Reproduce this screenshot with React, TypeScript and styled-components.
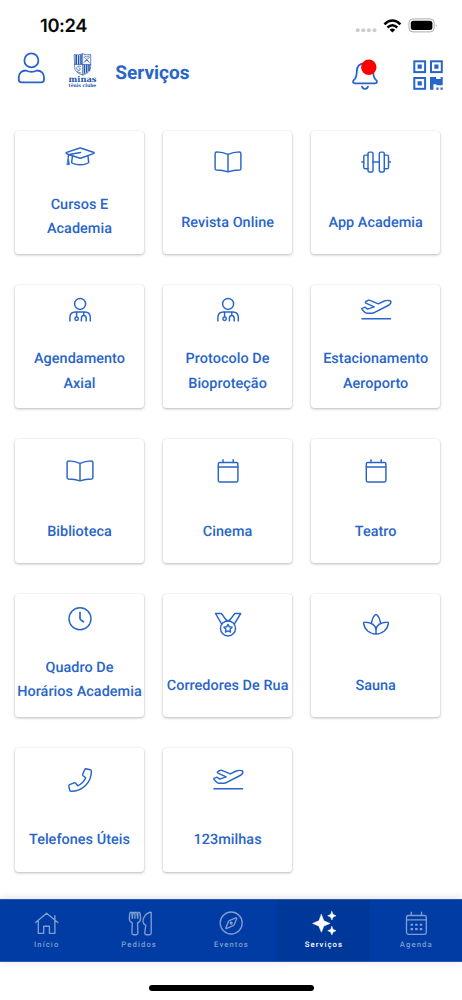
import React from "react";
import styled, { createGlobalStyle } from "styled-components";

const BLUE = "#2865c8";
const NAVY = "#003ca3";

const GlobalStyle = createGlobalStyle`
  * { box-sizing: border-box; }
  body { margin: 0; background: #fff; font-family: Roboto, "Liberation Sans", sans-serif; text-rendering: geometricPrecision; }
`;

const Screen = styled.div`
  width: 462px;
  height: 1000px;
  display: flex;
  flex-direction: column;
  background: #fff;
  overflow: hidden;
`;

const StatusBar = styled.div`
  height: 50px;
  padding: 0 27px 0 40px;
  display: flex;
  justify-content: space-between;
  align-items: center;
  flex: none;
`;

const Clock = styled.span`
  font: 600 18.3px/24px Inter, sans-serif;
  letter-spacing: -0.35px;
  color: #080808;
  padding-top: 1px;
`;

const Header = styled.header`
  height: 64px;
  flex: none;
  display: flex;
  align-items: flex-start;
  padding: 0 18px 0 17px;
`;

const HeaderIcon = styled.svg<{ $left?: number }>`
  flex: none;
  margin-left: ${(p) => p.$left ?? 0}px;
  fill: none;
  stroke: ${BLUE};
  stroke-width: 1.8;
  stroke-linecap: round;
  stroke-linejoin: round;
`;

const Title = styled.h1`
  margin: 11px auto 0 17.3px;
  font-size: 19px;
  line-height: 24px;
  font-weight: 700;
  letter-spacing: 0;
  color: ${BLUE};
`;

const Grid = styled.main`
  flex: none;
  height: 785px;
  padding: 16.7px 0 0 14.7px;
  display: grid;
  grid-template-columns: repeat(3, 129.6px);
  grid-auto-rows: 123.4px;
  column-gap: 18.5px;
  row-gap: 31px;
  align-content: start;
`;

const Card = styled.section`
  display: flex;
  flex-direction: column;
  align-items: center;
  background: #fff;
  border-radius: 3.5px;
  box-shadow: 0 1px 3px rgba(0, 0, 0, 0.27), 0 0 1.5px rgba(0, 0, 0, 0.08);
`;

const IconSlot = styled.div<{ $wrapped: boolean }>`
  display: flex;
  align-items: center;
  height: 50px;
  padding: 0.6px 0 0 0.6px;
  margin-top: ${(p) => (p.$wrapped ? 0 : 6)}px;
`;

const Glyph = styled.svg`
  display: block;
  width: 32px;
  height: 32px;
  overflow: visible;
  fill: none;
  stroke: currentColor;
  stroke-width: 1.45;
  stroke-linecap: round;
  stroke-linejoin: round;
  color: ${BLUE};
`;

const Label = styled.div<{ $wrapped: boolean }>`
  margin-top: ${(p) => (p.$wrapped ? 12.1 : 24.2)}px;
  font-size: 14.4px;
  line-height: 24.5px;
  font-weight: 500;
  letter-spacing: 0.06px;
  text-align: center;
  white-space: pre;
  color: ${BLUE};
`;

const TabBar = styled.nav`
  flex: none;
  height: 62.7px;
  display: grid;
  grid-template-columns: repeat(5, 1fr);
  background: ${NAVY};
  border-top: 1px solid #2858ac;
  border-bottom: 1px solid #2359b9;
  box-shadow: 0 -1px 8px rgba(0, 0, 0, 0.12);
`;

const Tab = styled.div<{ $active: boolean }>`
  display: flex;
  flex-direction: column;
  align-items: center;
  padding-top: 7px;
  background: ${(p) => (p.$active ? "#003899" : "transparent")};
  color: ${(p) => (p.$active ? "#fff" : "#7f9dd1")};
  ${Glyph} { color: inherit; stroke-width: 1.35; margin-left: 0.6px; }
`;

const TabLabel = styled.span`
  margin-top: 0.8px;
  padding-left: 1px;
  font-size: 7.7px;
  line-height: 10px;
  font-weight: 500;
  letter-spacing: 1.1px;
`;

const HomeArea = styled.footer`
  flex: 1;
  display: flex;
  justify-content: center;
  padding-top: 23.3px;
`;

const HomeIndicator = styled.div`
  width: 165px;
  height: 5.6px;
  border-radius: 3px;
  background: #000;
`;

const glyphs: Record<string, React.ReactNode> = {
  cap: (
    <>
      <path d="M15.1 8.2Q16.2 7.9 17.3 8.2L29.3 12.2Q31 12.9 29.3 13.6L17.3 18Q16.2 18.4 15.1 18L2.7 13.7Q1.4 13.1 2.7 12.4Z" />
      <path d="M8.4 16.4 7.6 22.5Q10.4 24.8 16.2 24.8T24.7 22.5L24 16.4M16.6 12.5 6.5 14.3Q4.5 14.8 4.3 16.4" />
      <path d="M4.3 16.2 5.4 24.7H3.2Z" fill="currentColor" strokeWidth=".7" />
    </>
  ),
  book: <path d="M16 8.4Q10.8 6.2 4.8 5.9 3.1 5.9 3.1 7.5V22.5Q3.1 23.8 4.4 24 11 24.2 16 25.9 21 24.2 27.6 24 28.9 23.8 28.9 22.5V7.5Q28.9 5.9 27.2 5.9 21.2 6.2 16 8.4ZM16 8.4V25.5" />,
  dumbbell: (
    <>
      <rect x="8" y="6.1" width="5" height="19.8" rx="1.5" />
      <rect x="19.3" y="6.1" width="5" height="19.8" rx="1.5" />
      <path d="M8 9.1H5.2Q3.8 9.1 3.8 10.5V21.4Q3.8 22.8 5.2 22.8H8M24.3 9.1H27.1Q28.5 9.1 28.5 10.5V21.4Q28.5 22.8 27.1 22.8H24.3M13 16H19.3M1.8 16H3.8M28.5 16H30.5" />
    </>
  ),
  doctor: (
    <>
      <circle cx="16.1" cy="9.9" r="5.5" />
      <path strokeLinecap="butt" d="M5.9 27.5V23.6C5.9 19.9 7.7 17.9 11.4 17.9H20.8C24.5 17.9 26.3 19.9 26.3 23.6V27.5M12.6 18V23M19.8 18V21.5M17.4 27.5V24.4C17.4 22.4 18.2 21.5 19.8 21.5S22.2 22.4 22.2 24.4V27.5" />
      <circle cx="12.6" cy="24.7" r="1.7" />
    </>
  ),
  plane: (
    <>
      <path d="M2 15.4C1.5 14.8 1.8 14.3 2.6 14.1L4.4 13.4Q5.2 13.1 5.9 13.8L7.7 15.1 14.2 12.9 5.9 9.2Q4.7 8.4 6 7.5L8 6.4Q9 5.9 10 6.4L18.3 9.9 24.2 7Q27.5 5.9 30 6.7 31.4 7.4 30.8 8.9 30 10.7 27.2 12L15.2 18.1Q13.3 19.2 11.7 19.2H6.8Q5.6 19.2 4.8 18.3Z" />
      <path d="M2 24.8H30.6" />
    </>
  ),
  calendar: (
    <>
      <rect x="6.3" y="7.4" width="19.6" height="19.6" rx="1.4" />
      <path d="M6.3 11.9H25.9M11 4.7V7.4M21.2 4.7V7.4" />
    </>
  ),
  clock: (
    <>
      <circle cx="16" cy="15.7" r="11" />
      <path strokeWidth="1.7" d="M16 9.4V15.2Q16 16.2 16.8 16.9L19.4 18.8" />
    </>
  ),
  medal: (
    <>
      <path d="M9.6 14.9 3.5 4.5H9.4L14.8 11.9M22.4 14.9 28.7 4.5H22.8L17.2 11.9M12.5 9 16 12.2 19.5 9" />
      <circle cx="16" cy="19.4" r="7.5" />
      <path d="m16 15.3 1.3 2.5 2.8.5-2 2 .4 2.8-2.5-1.2-2.5 1.2.4-2.8-2-2 2.8-.5Z" />
    </>
  ),
  lotus: <path d="M11.5 14.6C11.8 10.5 13.7 7.3 15.3 5.8Q16 5.3 16.7 5.8C18.3 7.3 20.2 10.5 20.5 14.6M16 24.7V21.3C16 17.2 12.4 13.6 4.4 13.1Q3.4 13.1 3.6 14.1C4.4 20.6 9.5 24.9 16 24.9S27.6 20.6 28.4 14.1Q28.6 13.1 27.6 13.1C19.6 13.6 16 17.2 16 21.3" />,
  phone: <path d="M22 4.7 26.2 5.7Q27.4 6 27.4 7.2C27.4 18.4 18.4 27.3 7.1 27.3 6.3 27.3 5.9 26.8 5.7 26.2L4.8 22.2Q4.6 21.1 5.6 20.6L10.1 18.8Q11 18.5 11.6 19.2L13.8 21.8C17.3 20.2 20.2 17.3 21.7 13.8L19.1 11.7Q18.4 11.1 18.7 10.2L20.7 5.6Q21.1 4.6 22 4.7Z" />,
  home: <path d="M5.6 15.6 16.6 6.2 27.8 15.6M8.3 13.6V26.4H13.7V19.2H19.4V26.4H24.9V13.6M24.9 13V8.7" />,
  cutlery: (
    <path d="M8 5.2Q6.9 5.2 6.8 6.2L6.3 11.2Q6.2 14.4 9.3 15.9L8.9 26Q9 27.7 10.7 27.7H13.1Q14.8 27.7 14.9 26L14.5 15.9Q17.8 14.4 17.6 11.2L17 6.2Q16.8 5.2 15.9 5.2T14.9 6.5L14.7 11.4 13.9 6Q13.8 5.2 12.8 5.2 11.9 5.2 11.9 6.4V11.3M12 6.4Q11.8 5.2 10.9 5.2T9.9 6.2L9.2 11.4 9 6.3Q8.9 5.2 8 5.2ZM28.2 5.3Q24.8 5.1 22 8.7 19.9 11.5 20 14.5 20 16.8 22.7 18.3L21.8 25.7Q21.7 27.7 23.6 27.7H26.6Q28.2 27.7 28.2 26Z" />
  ),
  compass: (
    <>
      <circle cx="16.2" cy="16" r="11" />
      <path d="M20.7 10.9 14.3 13.6Q13.8 13.8 13.6 14.3L10.9 20.7Q10.5 22 11.8 21.4L18.2 18.7Q18.8 18.5 19 17.9L21.7 11.8Q22 10.5 20.7 10.9Z" />
      <circle cx="16.2" cy="16.1" r=".9" />
    </>
  ),
  sparkles: (
    <path
      fill="currentColor"
      strokeWidth=".5"
      d="M13.4 7.4 15.9 13.8 22.1 16.4 15.9 19 13.4 25.3 10.8 19 4.6 16.4 10.8 13.8ZM23.9 4.5 25.1 7.5 28 8.8 25.1 10.1 23.9 13 22.6 10.1 19.7 8.8 22.6 7.5ZM23.9 19.5 25.1 22.5 28 23.7 25.1 25 23.9 27.9 22.6 25 19.7 23.7 22.6 22.5Z"
    />
  ),
  agenda: (
    <>
      <rect x="6.5" y="8.5" width="19.8" height="18.8" rx="1.8" />
      <path d="M6.5 12.8H26.3M11.3 5.2V8.5M21.5 5.2V8.5" />
      <path strokeLinecap="square" strokeWidth="2.1" d="M11.6 17.8H12M16.2 17.8H16.6M20.8 17.8H21.2M11.6 22.1H12M16.2 22.1H16.6M20.8 22.1H21.2" />
    </>
  ),
};

const Icon = ({ name }: { name: string }) => <Glyph viewBox="0 0 32 32">{glyphs[name]}</Glyph>;

const services = [
  ["cap", "Cursos E\nAcademia"],
  ["book", "Revista Online"],
  ["dumbbell", "App Academia"],
  ["doctor", "Agendamento\nAxial"],
  ["doctor", "Protocolo De\nBioproteção"],
  ["plane", "Estacionamento\nAeroporto"],
  ["book", "Biblioteca"],
  ["calendar", "Cinema"],
  ["calendar", "Teatro"],
  ["clock", "Quadro De\nHorários Academia"],
  ["medal", "Corredores De Rua"],
  ["lotus", "Sauna"],
  ["phone", "Telefones Úteis"],
  ["plane", "123milhas"],
];

const tabs = [
  ["home", "Início"],
  ["cutlery", "Pedidos"],
  ["compass", "Eventos"],
  ["sparkles", "Serviços"],
  ["agenda", "Agenda"],
];

const StatusIcons = () => (
  <svg width="80" height="18" viewBox="355 15.5 80 18">
    <g fill="#ccc">
      <circle cx="357.7" cy="29.7" r="2" />
      <circle cx="363.3" cy="29.7" r="2" />
      <circle cx="368.9" cy="29.7" r="2" />
      <circle cx="374.5" cy="29.7" r="2" />
    </g>
    <g fill="none" stroke="#000" strokeWidth="2.5">
      <path d="M384.4 23.8Q392.4 16.2 400.4 23.8" />
      <path d="M387.5 27Q392.4 22.6 397.3 27" />
    </g>
    <path d="M389.6 29.2Q392.4 27 395.2 29.2L392.4 32Z" />
    <rect x="409" y="18.4" width="25.2" height="13" rx="4" fill="none" stroke="#aaa" />
    <rect x="410.8" y="20.2" width="21.6" height="9.4" rx="2.5" />
    <path d="M435.9 23.2Q437.4 24.9 435.9 26.6Z" fill="#aaa" />
  </svg>
);

const StatusIconsBox = styled.div`
  display: flex;
  svg { overflow: visible; }
`;

const Logo = () => (
  <HeaderIcon $left={22} width="30" height="40" viewBox="68 50 30 40">
    <g stroke="#2355ad" strokeWidth=".7">
      <path d="M74.6 54.6Q78.8 55.5 82.6 53.8 86.6 55.5 90.7 54.6V66.5C90.7 71 88 73.4 82.6 75 77.3 73.4 74.6 71 74.6 66.5Z" />
      <path d="M74.6 64.4H90.7M82.6 54V75" />
      <path strokeWidth="1.6" strokeLinecap="butt" d="M76.2 55V64.4M78.6 55.2V64.4M81 54.5V64.4M84.4 64.4V73.8M86.7 64.4V72.7M89 64.4V70.9" />
      <path d="M84 57.2 89.3 62.5M89.3 57.2 84 62.5M84.7 56.2Q87 58.3 89.2 56.2M85 61Q86.7 59.3 88.5 61" />
      <path d="M80.6 66.4Q76.7 65.2 76.6 68.6 77.2 71.2 79.7 70.2 81.5 68.5 79 67.8M77.2 71.7 81 73" />
    </g>
    <g fill="#2355ad" stroke="none" fontFamily="'DejaVu Serif', serif" fontWeight="700">
      <text x="68.5" y="82.4" fontSize="8.2" textLength="28" lengthAdjust="spacingAndGlyphs">minas</text>
      <text x="68.6" y="87" fontSize="4.7" textLength="27.6" lengthAdjust="spacingAndGlyphs">tênis clube</text>
    </g>
  </HeaderIcon>
);

export default function App() {
  return (
    <Screen>
      <GlobalStyle />
      <StatusBar>
        <Clock>10:24</Clock>
        <StatusIconsBox>
          <StatusIcons />
        </StatusIconsBox>
      </StatusBar>
      <Header>
        <HeaderIcon width="29" height="36" viewBox="17 50 29 36">
          <circle cx="31.4" cy="60.4" r="7" />
          <path d="M25.8 70.5C29.3 72.1 33.6 72.1 37 70.5 41.2 70.5 44 73.5 44 77.4V79.4Q44 82.3 41.1 82.3H21.7Q18.8 82.3 18.8 79.4V77.4C18.8 73.5 21.6 70.5 25.8 70.5Z" />
        </HeaderIcon>
        <Logo />
        <Title>Serviços</Title>
        <HeaderIcon width="29" height="42" viewBox="351 50 29 42">
          <path d="M355 83.3H375C377.2 83.3 377.4 81.3 376.2 80.2 373.5 77.7 373.2 75.8 373.2 71.4 373.2 66.2 370 63.3 365 63.3S356.8 66.2 356.8 71.4C356.8 75.8 356.5 77.7 353.8 80.2 352.6 81.3 352.8 83.3 355 83.3ZM362 86.6Q362.6 88.8 365 88.8T368 86.6" />
          <circle cx="368.8" cy="67.3" r="7.7" fill="#fe0000" stroke="none" />
        </HeaderIcon>
        <HeaderIcon $left={32} width="32" height="42" viewBox="412 50 32 42">
          <g strokeLinejoin="miter" strokeWidth="2">
            <rect x="414.3" y="61.3" width="10.8" height="10.8" />
            <rect x="431" y="61.3" width="10.8" height="10.8" />
            <rect x="414.3" y="78" width="10.8" height="10.8" />
          </g>
          <path fill={BLUE} stroke="none" d="M417.6 64.6h4.2v4.2h-4.2zM434.3 64.6h4.2v4.2h-4.2zM417.6 81.3h4.2v4.2h-4.2zM430 77h6.2v2h4.4v-2h2.1v8.3h-6.3v-1h-3v5.4H430zM436.3 87.4h2.2v2.3h-2.2zM440.5 87.4h2.2v2.3h-2.2z" />
        </HeaderIcon>
      </Header>
      <Grid>
        {services.map(([icon, label]) => {
          const wrapped = label.includes("\n");
          return (
            <Card key={label}>
              <IconSlot $wrapped={wrapped}>
                <Icon name={icon} />
              </IconSlot>
              <Label $wrapped={wrapped}>{label}</Label>
            </Card>
          );
        })}
      </Grid>
      <TabBar>
        {tabs.map(([icon, label]) => (
          <Tab key={label} $active={label === "Serviços"}>
            <Icon name={icon} />
            <TabLabel>{label}</TabLabel>
          </Tab>
        ))}
      </TabBar>
      <HomeArea>
        <HomeIndicator />
      </HomeArea>
    </Screen>
  );
}
